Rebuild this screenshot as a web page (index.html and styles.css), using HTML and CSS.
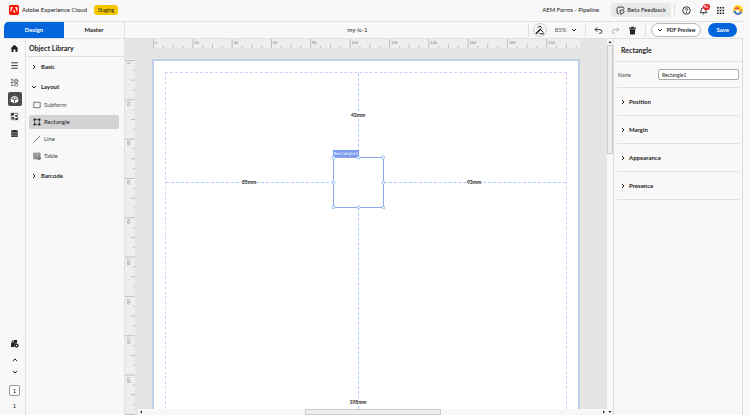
FILE: index.html
```html
<!DOCTYPE html>
<html lang="en">
<head>
<meta charset="utf-8">
<title>my-ic-1</title>
<link rel="stylesheet" href="styles.css">
</head>
<body>
<header class="topbar">
  <svg class="logo" viewBox="0 0 10 10" aria-hidden="true"><rect width="10" height="10" rx="1.8" fill="#fa0f00"/><path d="M3.9 2.1H1.6V7.9zM6.1 2.1h2.3v5.8zM5 4.2l1.5 3.7h-1l-.45-1.15H3.9z" fill="#fff"/></svg>
  <span class="brand">Adobe Experience Cloud</span>
  <span class="badge">Staging</span>
  <span class="org">AEM Forms - Pipeline</span>
  <button class="feedback"><svg viewBox="0 0 10 10" aria-hidden="true"><path d="M3.4 8.8H3Q1.2 8.8 1.2 7V3Q1.2 1.2 3 1.2H7Q8.8 1.2 8.8 3V3.6" class="line"/><path d="M8.8 5.6Q8.8 4.5 7.6 4.5H5.6Q4.5 4.5 4.5 5.6V6.8Q4.5 7.8 5.6 7.8V9.4L7.2 7.8Q8.8 7.8 8.8 6.6z" class="line"/></svg>Beta Feedback</button>
  <span class="rule"></span>
  <button class="icon help" aria-label="Help"><svg viewBox="0 0 10 10"><circle cx="5" cy="5" r="4.2" class="line"/><path d="M3.7 4Q3.8 2.9 5 2.9T6.3 4Q6.3 4.6 5.5 5T5 6" class="line"/><circle cx="5" cy="7.3" r=".6"/></svg></button>
  <button class="icon bell" aria-label="Notifications"><svg viewBox="0 0 10 10"><path d="M1.2 7.4Q2.4 6.3 2.4 4.4Q2.4 1.8 5 1.8T7.6 4.4Q7.6 6.3 8.8 7.4z" class="line"/><path d="M3.8 8.2h2.4Q6 9.4 5 9.4T3.8 8.2z"/></svg><span class="count">9+</span></button>
  <button class="icon apps" aria-label="Apps"><svg viewBox="0 0 10 10"><path d="M1.2 2H9M1.2 5H9M1.2 8H9" stroke="#222" stroke-width="1.8" stroke-dasharray="1.8 1.2"/></svg></button>
  <button class="icon avatar" aria-label="Account"><svg viewBox="0 0 10 10"><circle cx="5" cy="5" r="5" fill="#ffd929"/><path d="M.2 6.2L2.4 5.4 4 8 8.6 6.6 9.4 7.2Q8 10 5 10T.2 6.2z" fill="#4a74dc"/><path d="M1 4L4 1.4 6.8 3.6 4.4 4.6z" fill="#f04a5c"/><path d="M5.4 5.2L8.4 4.4 9.4 6z" fill="#f04a5c"/><path d="M2.4 5.6L5 4.4 6.6 7.2 4 8z" fill="#fff"/></svg></button>
</header>
<div class="shell">
  <nav class="toolbar">
    <div class="tabs"><button class="tab active">Design</button><button class="tab">Master</button></div>
    <h1 class="doc">my-ic-1</h1>
    <div class="tools">
      <span class="rule"></span>
      <button class="round" aria-label="Edit tools"><svg viewBox="0 0 10 10"><path d="M2.6 2.4L5 1 6.6 2.8 5.2 4.2 8.6 7.4" class="line"/><path d="M1 8.8L5 4.6" stroke="#222" stroke-width="1.6"/><path d="M4.4 8.8H9.2" class="line"/></svg></button>
      <button class="zoom">85%<svg class="chev" viewBox="0 0 6 6" aria-hidden="true"><path d="M1 2L3 4 5 2" class="line"/></svg></button>
      <span class="rule"></span>
      <button class="icon" aria-label="Undo"><svg viewBox="0 0 10 10"><path d="M3.6 1.6L1.2 4 3.6 6.4M1.4 4H6.4Q8.8 4 8.8 6.1T6.6 8.2H5.6" class="line"/></svg></button>
      <button class="icon faded" aria-label="Redo"><svg viewBox="0 0 10 10"><path d="M6.4 1.6L8.8 4 6.4 6.4M8.6 4H3.6Q1.2 4 1.2 6.1T3.4 8.2H4.4" class="line"/></svg></button>
      <button class="icon" aria-label="Delete"><svg viewBox="0 0 10 10"><path d="M1.2 1.8h2.4V.9h2.8v.9h2.4V3H1.2zM1.9 3.5h6.2L7.6 9.4H2.4z"/></svg></button>
      <span class="rule"></span>
      <button class="preview"><svg class="chev" viewBox="0 0 6 6" aria-hidden="true"><path d="M1 2L3 4 5 2" class="line"/></svg>PDF Preview</button>
      <button class="save">Save</button>
    </div>
  </nav>
  <div class="work">
    <nav class="rail">
      <button aria-label="Home"><svg viewBox="0 0 10 10"><path d="M5 .8L9.4 5H8.3V9H6.1V6.2H3.9V9H1.7V5H.6z"/></svg></button>
      <button aria-label="Outline"><svg viewBox="0 0 10 10"><path d="M1.5 2H8.7M1.5 5H8.7M1.5 8H8.7" class="line"/></svg></button>
      <button aria-label="Bindings"><svg viewBox="0 0 10 10"><path d="M1 1.6H3.4M1 5H3.4M1 8.4H5M2.2 1.6V8.4M4.4 2.4L6.6 1.2 8.8 2.4V5L6.6 6.2 4.4 5zM4.4 2.4L6.6 3.6 8.8 2.4M6.6 3.6V6.2" class="thin"/><circle cx="7" cy="7.5" r="1.6" class="thin"/></svg></button>
      <button class="current" aria-label="Object library"><svg viewBox="0 0 10 10"><path d="M5 .8L9 2.9 5 5 1 2.9zM.8 3.7L4.6 5.7V9.3L.8 7.2zM9.2 3.7L5.4 5.7V9.3L9.2 7.2z" fill="#fff"/><path d="M3 2l4 2M7 2L3 4" stroke="#4b4b4b" stroke-width=".6"/></svg></button>
      <button aria-label="Fragments"><svg viewBox="0 0 10 10"><path d="M1.4 1.4H8.6V8.6H1.4z" class="thin"/><path d="M1.4 1.4H4.4V4H1.4zM5.8 3.4h2v2h-2zM2.4 5.6h2.2v2.2H2.4zM6 6.8h2.4v1.8H6z"/></svg></button>
      <button aria-label="Data sources"><svg viewBox="0 0 10 10"><path d="M1.2 2.3Q1.2 1 5 1T8.8 2.3V7.7Q8.8 9 5 9T1.2 7.7z"/><path d="M1 3.4Q5 4.6 9 3.4M1 5.3Q5 6.5 9 5.3M1 7.1Q5 8.3 9 7.1" stroke="#f8f8f8" stroke-width=".5" fill="none"/></svg></button>
      <div class="pager">
        <button aria-label="Page settings"><svg viewBox="0 0 10 10"><path d="M4 1H7.8V4.4Q4.8 4.4 4.8 9H1.2V4H4zM3.2 1.2V3.2H1.3z"/><circle cx="7.3" cy="7.3" r="2.3"/><circle cx="7.3" cy="7.3" r=".8" fill="#f8f8f8"/></svg></button>
        <button aria-label="Previous page"><svg class="chev" viewBox="0 0 6 6"><path d="M.8 4L3 2 5.2 4" class="line"/></svg></button>
        <button aria-label="Next page"><svg class="chev" viewBox="0 0 6 6"><path d="M.8 2L3 4 5.2 2" class="line"/></svg></button>
        <input class="pageno" aria-label="Page" value="1">
        <span>1</span>
      </div>
    </nav>
    <aside class="library">
      <h2>Object Library</h2>
      <button class="group"><svg class="chev" viewBox="0 0 6 6" aria-hidden="true"><path d="M2 1L4 3 2 5" class="line"/></svg>Basic</button>
      <button class="group"><svg class="chev" viewBox="0 0 6 6" aria-hidden="true"><path d="M1 2L3 4 5 2" class="line"/></svg>Layout</button>
      <ul>
        <li><button><svg viewBox="0 0 8 8" aria-hidden="true"><path d="M.8 1.3H7.2V6.7H.8z" class="thin"/></svg>Subform</button></li>
        <li><button class="selected"><svg viewBox="0 0 8 8" aria-hidden="true"><path d="M1.6 1.6H6.4V6.4H1.6z" class="thin"/><path d="M.6.6h2v2h-2zM5.4.6h2v2h-2zM.6 5.4h2v2h-2zM5.4 5.4h2v2h-2z"/></svg>Rectangle</button></li>
        <li><button><svg viewBox="0 0 8 8" aria-hidden="true"><path d="M1 7L7 1" class="thin"/></svg>Line</button></li>
        <li><button><svg viewBox="0 0 8 8" aria-hidden="true"><path d="M4 6.8H.8V1.2H7V4M.8 2.9H7M.8 4.9H4M2.9 2.9V6.8M5 2.9V4" class="thin"/><circle cx="6" cy="6" r="1.8"/><path d="M5 6H7M6 5V7" stroke="#f8f8f8" stroke-width=".5"/></svg>Table</button></li>
      </ul>
      <button class="group"><svg class="chev" viewBox="0 0 6 6" aria-hidden="true"><path d="M2 1L4 3 2 5" class="line"/></svg>Barcode</button>
    </aside>
    <main class="canvas">
      <div class="ruler-x"><svg id="rx" height="10" aria-hidden="true"></svg></div>
      <div class="ruler-y"><svg id="ry" width="10" aria-hidden="true"></svg></div>
      <div class="stage">
        <div class="sheet">
          <div class="margins">
            <span class="guide up"></span><span class="guide down"></span><span class="guide left"></span><span class="guide right"></span>
            <span class="dist d-up">43mm</span><span class="dist d-left">85mm</span><span class="dist d-right">93mm</span><span class="dist d-down">198mm</span>
            <span class="tag">Rectangle1</span>
            <svg class="shape" viewBox="0 0 54 54" aria-hidden="true"><path d="M2.5 2.5H52.5V52.5H2.5z" fill="#fff" stroke="#8fa9e6"/><g fill="#fff" stroke="#72b0ec" stroke-width=".8"><circle cx="2.5" cy="2.5" r="1.5"/><circle cx="27.5" cy="2.5" r="1.5"/><circle cx="52.4" cy="2.5" r="1.5"/><circle cx="2.5" cy="27.5" r="1.5"/><circle cx="52.4" cy="27.5" r="1.5"/><circle cx="2.5" cy="52.4" r="1.5"/><circle cx="27.5" cy="52.4" r="1.5"/><circle cx="52.4" cy="52.4" r="1.5"/></g></svg>
          </div>
        </div>
      </div>
      <div class="scroll-y"><svg viewBox="0 0 6 6" aria-hidden="true"><path d="M1.5 4L3 2 4.5 4z"/></svg><div class="thumb"></div><svg viewBox="0 0 6 6" aria-hidden="true"><path d="M1.5 2L3 4 4.5 2z"/></svg></div>
      <div class="scroll-x"><svg viewBox="0 0 6 6" aria-hidden="true"><path d="M4 1.5L2 3 4 4.5z"/></svg><div class="thumb"></div><svg viewBox="0 0 6 6" aria-hidden="true"><path d="M2 1.5L4 3 2 4.5z"/></svg></div>
    </main>
    <aside class="props">
      <h2>Rectangle</h2>
      <div class="body">
        <div class="field"><label for="name">Name</label><input id="name" value="Rectangle1"></div>
        <button class="section"><svg class="chev" viewBox="0 0 6 6" aria-hidden="true"><path d="M2 1L4 3 2 5" class="line"/></svg>Position</button>
        <button class="section"><svg class="chev" viewBox="0 0 6 6" aria-hidden="true"><path d="M2 1L4 3 2 5" class="line"/></svg>Margin</button>
        <button class="section"><svg class="chev" viewBox="0 0 6 6" aria-hidden="true"><path d="M2 1L4 3 2 5" class="line"/></svg>Appearance</button>
        <button class="section"><svg class="chev" viewBox="0 0 6 6" aria-hidden="true"><path d="M2 1L4 3 2 5" class="line"/></svg>Presence</button>
      </div>
    </aside>
  </div>
</div>
<script src="rulers.js"></script>
</body>
</html>
```
FILE: styles.css
```css
* { box-sizing: border-box; }
html, body { height: 100%; }
body {
  margin: 0;
  display: flex;
  flex-direction: column;
  overflow: hidden;
  background: #f8f8f8;
  color: #222;
  font: 6px/10px Lato, sans-serif;
}
button, input { font: inherit; color: inherit; margin: 0; padding: 0; border: 0; background: none; }
button { display: flex; align-items: center; white-space: nowrap; }
h1, h2, ul { margin: 0; padding: 0; font: inherit; list-style: none; }
svg { display: block; flex: none; fill: #222; }
.line { fill: none; stroke: #222; stroke-width: 1; }
.thin { fill: none; stroke: #444; stroke-width: .7; }
.chev { width: 6px; height: 6px; }
.rule { width: 1px; height: 14px; background: #e1e1e1; }

.topbar { flex: none; height: 21px; display: flex; align-items: center; padding: 0 7px 1px 9px; }
.logo { width: 10px; height: 10px; }
.brand { margin-left: 3px; }
.badge { margin-left: 7px; padding: 0 4px; border-radius: 3px; background: #f5c700; font-size: 5px; }
.org { margin-left: auto; }
.feedback { height: 14px; margin: 0 3px 0 12px; padding: 0 5px; gap: 2px; border-radius: 3px; background: #e9e9e9; }
.feedback svg, .icon svg { width: 9px; height: 9px; }
.help { margin-left: 7px; }
.bell { margin-left: 8px; position: relative; }
.count { position: absolute; left: 4px; top: -2px; padding: 0 1px; border-radius: 4px; background: #e61e1e; color: #fff; font: bold 4px/6px Lato, sans-serif; }
.apps { margin-left: 8px; }
.avatar { margin-left: 8px; }
.avatar svg { width: 10px; height: 10px; }

.shell { flex: 1; min-height: 0; margin: 0 7px 0 4px; display: flex; flex-direction: column; border-radius: 6px 0 0 0; overflow: hidden; }
.toolbar { flex: none; height: 18px; display: grid; grid-template-columns: 121px 1fr auto; align-items: center; border: solid #e1e1e1; border-width: 1px 0; }
.tabs { display: grid; grid-template-columns: 1fr 1fr; align-self: stretch; border-right: 1px solid #e1e1e1; }
.tab { justify-content: center; font-weight: bold; }
.tab.active { background: #0265dc; color: #fff; }
.doc { justify-self: center; padding-left: 62px; }
.tools { display: flex; align-items: center; padding-right: 6px; }
.round { width: 14px; height: 14px; margin: 0 8px 0 4px; justify-content: center; border: 1px solid #ccc; border-radius: 50%; }
.round svg { width: 10px; height: 10px; }
.zoom { gap: 4px; margin-right: 8px; color: #555; }
.tools .icon { margin-left: 8px; }
.tools .icon + .rule { margin: 0 5px 0 8px; }
.faded { opacity: .35; }
.preview { height: 14px; padding: 0 5px; gap: 4px; border: 1px solid #b8b8b8; border-radius: 7px; background: #fff; font-size: 5px; font-weight: bold; }
.save { height: 14px; margin-left: 7px; padding: 0 8px; border-radius: 7px; background: #0265dc; color: #fff; font-weight: bold; }

.work { flex: 1; min-height: 0; display: grid; grid-template-columns: 22px 99px 1fr 130px; }
.rail { display: flex; flex-direction: column; align-items: center; gap: 3px; padding-top: 2px; border-right: 1px solid #e1e1e1; }
.rail button { width: 14px; height: 14px; justify-content: center; border-radius: 2px; }
.rail > button svg { width: 9px; height: 9px; }
.rail > .current { background: #4b4b4b; }
.pager { margin-top: auto; padding-bottom: 4px; display: flex; flex-direction: column; align-items: center; }
.pager button { height: 12px; }
.pager button:first-child { height: 16px; margin-bottom: 3px; }
.pager button:first-child svg { width: 9px; height: 9px; }
.pageno { width: 11px; height: 11px; margin: 7px 0 5px; border: 1px solid #999; border-radius: 2px; background: #fff; text-align: center; }

.library { border-right: 1px solid #e1e1e1; }
h2 { height: 18px; padding-left: 3px; border-bottom: 1px solid #e1e1e1; font: bold 7px/18px Lato, sans-serif; }
.group { height: 20px; padding-left: 5px; gap: 4px; font-weight: bold; }
.library ul { padding-top: 1px; }
.library li button { width: calc(100% - 8px); height: 14px; margin: 0 5px 3px 3px; padding-left: 4px; gap: 3px; border-radius: 2px; color: #444; }
.library li svg { width: 8px; height: 8px; }
.library li .selected { background: #d3d3d3; color: #222; }

.canvas { min-width: 0; min-height: 0; overflow: hidden; display: grid; grid-template: 9px 11px minmax(0, 1fr) 6px / 10px 3px minmax(0, 1fr) 6px; background: #e5e5e5; }
.ruler-x { grid-area: 1 / 3 / 2 / 4; margin: 0 27px 0 15px; background: #eee; overflow: hidden; }
.ruler-y { grid-area: 3 / 1 / 5 / 2; padding-top: 1px; background: #eee; overflow: hidden; }
#rx { width: 100%; }
#ry { height: 100%; }
.tick { stroke: #b4b4b4; stroke-width: .8; }
.num { fill: #777; font: 4px "Liberation Sans", sans-serif; }
.stage { grid-area: 3 / 3 / 4 / 4; padding: 0 27px 0 14px; overflow: hidden; }
.sheet { height: 100%; padding: 11px 11px 0; border: solid #bfd1e7; border-width: 2px 2px 0; background: #fff; }
.margins { position: relative; height: 100%; border: dashed #e3c8f7; border-width: 1px 1px 0; }
.guide { position: absolute; border: 0 dashed #b0ccff; }
.up { left: 192px; top: 0; height: 84px; border-left-width: 1px; }
.down { left: 192px; top: 135px; bottom: 0; border-left-width: 1px; }
.left { left: 0; top: 109px; width: 168px; border-top-width: 1px; }
.right { left: 218px; top: 109px; right: 0; border-top-width: 1px; }
.dist { position: absolute; background: #fff; font: bold 5px/8px Lato, sans-serif; transform: translate(-50%, -50%); }
.d-up { left: 192px; top: 42px; }
.d-left { left: 83px; top: 109px; }
.d-right { left: 308px; top: 109px; }
.d-down { left: 192px; top: 329px; }
.tag { position: absolute; left: 167px; top: 77px; padding: 0 1px; background: #7c9cf0; color: #fff; font: 4px/7px "DejaVu Sans Mono", monospace; }
.shape { position: absolute; left: 165px; top: 82px; width: 54px; height: 54px; }
.scroll-y { grid-area: 1 / 4 / 5 / 5; display: flex; flex-direction: column; background: #f8f8f8; }
.scroll-x { grid-area: 4 / 3 / 5 / 4; display: flex; background: #f8f8f8; }
.scroll-y svg, .scroll-x svg { width: 6px; height: 6px; }
.thumb { border: 1px solid #ccc; background: #eee; }
.scroll-y .thumb { height: 29%; margin-bottom: auto; }
.scroll-x .thumb { width: 29%; margin: 0 auto; }

.props { border: solid #dcdcdc; border-width: 0 1px; }
.props h2 { height: 23px; padding-left: 7px; line-height: 23px; }
.body { padding: 0 3px; }
.field { height: 26px; display: flex; align-items: center; border-bottom: 1px solid #e1e1e1; }
.field label { width: 41px; padding-left: 1px; font-size: 5px; color: #444; }
.field input { flex: 1; min-width: 0; height: 11px; padding: 0 3px; border: 1px solid #aaa; border-radius: 2px; background: #fff; font-size: 5px; }
.section { width: 100%; height: 28px; padding-left: 3px; gap: 3px; border-bottom: 1px solid #e1e1e1; font-weight: bold; }
```
FILE: rulers.js
```js
// Draws the millimetre rulers: a long tick every 20 mm, short ones every 5 mm.
const PX_PER_MM = 1.966;

function add(parent, name, attrs, text) {
  const el = document.createElementNS('http://www.w3.org/2000/svg', name);
  for (const key in attrs) el.setAttribute(key, attrs[key]);
  if (text !== undefined) el.textContent = text;
  parent.append(el);
}

function drawRuler(svg, vertical, thick, end) {
  for (let mm = 0; mm <= end; mm += 5) {
    const p = mm * PX_PER_MM + 0.5;
    const len = mm % 20 === 0 ? thick : mm % 10 === 0 ? 4 : 2;
    add(svg, 'line', vertical
      ? { x1: thick - len, x2: thick, y1: p, y2: p, class: 'tick' }
      : { x1: p, x2: p, y1: thick - len, y2: thick, class: 'tick' });
    if (mm % 20 || mm === 180 && vertical) continue;
    add(svg, 'text', vertical
      ? { transform: `translate(2 ${p + 1.5})rotate(90)`, class: 'num' }
      : { x: p + 1.5, y: 5, class: 'num' }, mm);
  }
}

drawRuler(document.getElementById('rx'), false, 9, 215);
drawRuler(document.getElementById('ry'), true, 10, 180);
```
